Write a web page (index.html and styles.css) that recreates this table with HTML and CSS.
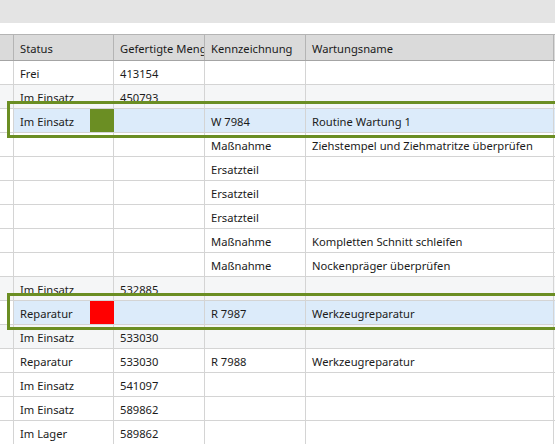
FILE: index.html
```html
<!DOCTYPE html>
<html lang="de">
<head>
<meta charset="utf-8">
<link rel="stylesheet" href="styles.css">
</head>
<body>
<div class="topbar"></div>
<div class="gridwrap">
  <div class="grid">
    <div class="row head">
      <div class="c c0"></div><div class="c c1">Status</div><div class="c c2">Gefertigte Menge</div><div class="c c3">Kennzeichnung</div><div class="c c4">Wartungsname</div>
    </div>
    <div class="row"><div class="c c0"></div><div class="c c1">Frei</div><div class="c c2">413154</div><div class="c c3"></div><div class="c c4"></div></div>
    <div class="row alt"><div class="c c0"></div><div class="c c1">Im Einsatz</div><div class="c c2">450793</div><div class="c c3"></div><div class="c c4"></div></div>
    <div class="row sel"><div class="c c0"></div><div class="c c1 st"><span class="stx">Im Einsatz</span><span class="sw green"></span></div><div class="c c2"></div><div class="c c3">W 7984</div><div class="c c4">Routine Wartung 1</div></div>
    <div class="row"><div class="c c0"></div><div class="c c1"></div><div class="c c2"></div><div class="c c3">Maßnahme</div><div class="c c4">Ziehstempel und Ziehmatritze überprüfen</div></div>
    <div class="row"><div class="c c0"></div><div class="c c1"></div><div class="c c2"></div><div class="c c3">Ersatzteil</div><div class="c c4"></div></div>
    <div class="row"><div class="c c0"></div><div class="c c1"></div><div class="c c2"></div><div class="c c3">Ersatzteil</div><div class="c c4"></div></div>
    <div class="row"><div class="c c0"></div><div class="c c1"></div><div class="c c2"></div><div class="c c3">Ersatzteil</div><div class="c c4"></div></div>
    <div class="row"><div class="c c0"></div><div class="c c1"></div><div class="c c2"></div><div class="c c3">Maßnahme</div><div class="c c4">Kompletten Schnitt schleifen</div></div>
    <div class="row"><div class="c c0"></div><div class="c c1"></div><div class="c c2"></div><div class="c c3">Maßnahme</div><div class="c c4">Nockenpräger überprüfen</div></div>
    <div class="row alt"><div class="c c0"></div><div class="c c1">Im Einsatz</div><div class="c c2">532885</div><div class="c c3"></div><div class="c c4"></div></div>
    <div class="row sel"><div class="c c0"></div><div class="c c1 st"><span class="stx">Reparatur</span><span class="sw red"></span></div><div class="c c2"></div><div class="c c3">R 7987</div><div class="c c4">Werkzeugreparatur</div></div>
    <div class="row alt"><div class="c c0"></div><div class="c c1">Im Einsatz</div><div class="c c2">533030</div><div class="c c3"></div><div class="c c4"></div></div>
    <div class="row"><div class="c c0"></div><div class="c c1">Reparatur</div><div class="c c2">533030</div><div class="c c3">R 7988</div><div class="c c4">Werkzeugreparatur</div></div>
    <div class="row"><div class="c c0"></div><div class="c c1">Im Einsatz</div><div class="c c2">541097</div><div class="c c3"></div><div class="c c4"></div></div>
    <div class="row"><div class="c c0"></div><div class="c c1">Im Einsatz</div><div class="c c2">589862</div><div class="c c3"></div><div class="c c4"></div></div>
    <div class="row"><div class="c c0"></div><div class="c c1">Im Lager</div><div class="c c2">589862</div><div class="c c3"></div><div class="c c4"></div></div>
  </div>
  <div class="outline o1"></div>
  <div class="outline o2"></div>
</div>
</body>
</html>
```
FILE: styles.css
```css
html, body {
  margin: 0;
  padding: 0;
  background: #ffffff;
  overflow: hidden;
  width: 555px;
  height: 444px;
}
body {
  font-family: "Noto Sans", "Open Sans", "DejaVu Sans", sans-serif;
  font-size: 11.2px;
  color: #1b1b1b;
}
.topbar {
  height: 23px;
  background: #e4e4e4;
}
.gridwrap {
  position: relative;
  margin-top: 11px;
}
.grid {
  display: flex;
  flex-direction: column;
}
.row {
  display: flex;
  height: 24px;
  border-bottom: 1px solid #d4d4d4;
  box-sizing: border-box;
  background: #ffffff;
}
.row.alt {
  background: #f5f6f7;
}
.row.sel {
  background: #dcebfa;
}
.row.head {
  height: 27px;
  background: #dadada;
  border-top: 1px solid #b4b4b4;
  border-bottom: 1px solid #a4a4a4;
}
.c {
  box-sizing: border-box;
  border-right: 1px solid #d4d4d4;
  padding: 1px 0 0 6px;
  display: flex;
  align-items: center;
  white-space: nowrap;
  overflow: hidden;
}
.head .c {
  border-right-color: #b4b4b4;
}
.c0 { width: 14px; padding: 0; }
.c1 { width: 100px; }
.c2 { width: 91px; }
.c3 { width: 101px; }
.c4 { width: 248px; }
.row.sel .c0 { background: #ffffff; }
.c1.st {
  justify-content: space-between;
  align-items: stretch;
  padding-top: 0;
  padding-right: 0;
  border-right: none;
  width: 100px;
}
.stx {
  display: flex;
  align-items: center;
  padding-top: 1px;
}
.sw {
  width: 24px;
  margin-bottom: -1px;
}
.sw.green { background: #6b8e23; }
.sw.red { background: #ff0000; }
.outline {
  position: absolute;
  left: 7px;
  width: 560px;
  height: 37px;
  box-sizing: border-box;
  border: 3px solid #6b8e23;
}
.o1 { top: 67px; }
.o2 { top: 259px; }
```
